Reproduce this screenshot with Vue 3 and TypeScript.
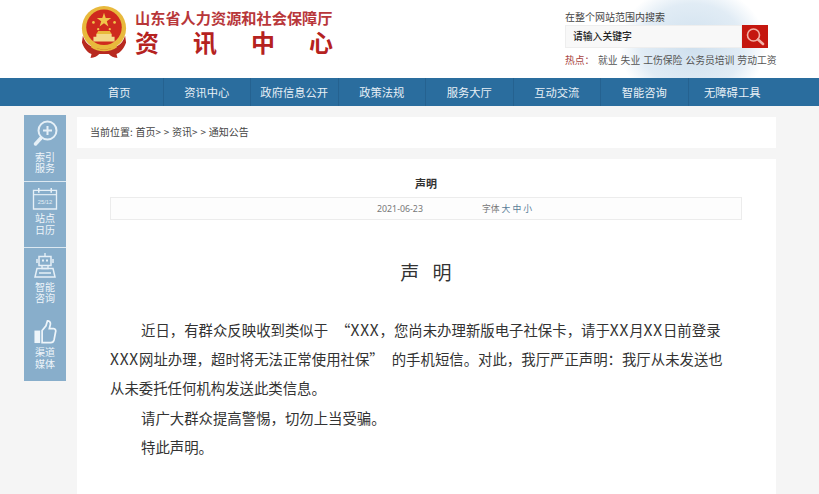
<template>
  <div class="page">
    <header class="top">
      <div class="watermark"></div>
      <div class="logo">
        <svg class="emblem" width="48" height="53" viewBox="0 0 50 55">
          <circle cx="25" cy="23" r="23" fill="#e8b93c" />
          <circle cx="25" cy="22" r="18.5" fill="#cf2a1e" />
          <path d="M25 7l1.800 5.400h5.700l-4.600 3.400 1.700 5.400-4.600-3.300-4.600 3.300 1.700-5.400-4.600-3.400h5.700z" fill="#f0c64a" />
          <circle cx="14" cy="17" r="1.400" fill="#f0c64a" />
          <circle cx="36" cy="17" r="1.400" fill="#f0c64a" />
          <circle cx="19" cy="24" r="1.200" fill="#f0c64a" />
          <circle cx="31" cy="24" r="1.200" fill="#f0c64a" />
          <path d="M14 37v-5h3v-3h16v3h3v5z" fill="#f3d98a" />
          <path d="M19 26h12l2 3h-16z" fill="#e8b93c" />
          <path d="M3 31c3 10 11 14 22 14s19-4 22-14l1 7c-3 8-7 11-10 12l1 4c-4 0-7-2-9-4h-10c-2 2-5 4-9 4l1-4c-3-1-7-4-10-12z" fill="#b8291f" />
          <path d="M12 42c4 3 8 4 13 4s9-1 13-4" fill="none" stroke="#e8b93c" stroke-width="2" />
        </svg>
        <div class="logo-text">
          <div class="org">山东省人力资源和社会保障厅</div>
          <div class="site">
            <span>资</span><span>讯</span><span>中</span><span>心</span>
          </div>
        </div>
      </div>
      <div class="search">
        <div class="search-tip">在整个网站范围内搜索</div>
        <div class="search-box">
          <div class="search-input">请输入关键字</div>
          <button class="search-btn" type="button" aria-label="搜索">
            <svg width="20" height="20" viewBox="0 0 20 20" fill="none">
              <circle cx="8.500" cy="8" r="6" stroke="#f3b1a6" stroke-width="1.600" />
              <path d="M13 12.500l5 4.500" stroke="#f3b1a6" stroke-width="2.600" stroke-linecap="round" />
            </svg>
          </button>
        </div>
        <div class="hot">
          <span class="hot-label">热点：</span>
          <a v-for="h in hotWords" :key="h" class="hot-link">{{ h }}</a>
        </div>
      </div>
    </header>

    <nav class="nav">
      <div class="nav-inner">
        <a v-for="n in navItems" :key="n" class="nav-item">{{ n }}</a>
      </div>
    </nav>

    <main class="main">
      <aside class="side">
        <div class="side-item">
          <svg width="26" height="28" viewBox="0 0 26 28" fill="none" stroke="#e6f0f7">
            <circle cx="15.500" cy="10.500" r="9" stroke-width="2" />
            <path d="M15.500 6v9M11 10.500h9" stroke-width="2" />
            <path d="M9 18l-5.500 6" stroke-width="3.500" stroke-linecap="round" />
          </svg>
          <span>索引<br />服务</span>
        </div>
        <div class="side-item">
          <svg width="26" height="23" viewBox="0 0 26 24" fill="none" stroke="#e6f0f7">
            <path d="M1 3.500h24v19.500h-24z" stroke-width="1.400" />
            <path d="M1 8h24" stroke-width="1.200" />
            <path d="M6.500 1v5M19.500 1v5" stroke-width="1.600" />
            <text x="13" y="18" text-anchor="middle" class="cal-text">25/12</text>
          </svg>
          <span>站点<br />日历</span>
        </div>
        <div class="side-item">
          <svg width="22" height="25" viewBox="0 0 22 25" fill="none" stroke="#e6f0f7">
            <path d="M11 0v3" stroke-width="1.400" />
            <path d="M5 3.500h12v9h-12zM3 6v4M19 6v4" stroke-width="1.500" />
            <path d="M8 6.500h2v2h-2zM12 6.500h2v2h-2z" fill="#e6f0f7" stroke="none" />
            <path d="M8 12.500v3h6v-3" stroke-width="1.400" />
            <path d="M3 15.500h16l2 8.500h-20z" stroke-width="1.500" />
            <path d="M5 20h12" stroke-width="1.500" />
          </svg>
          <span>智能<br />咨询</span>
        </div>
        <div class="side-item">
          <svg width="24" height="24" viewBox="0 0 24 25">
            <path d="M1 11h6v13h-6z" fill="#eef5fa" />
            <path d="M9 11l4-5 1.500-5c2.500-.5 3.500 2 3 4l-1 4h4.500c2 0 2.500 2 2 3.500l-1.500 8c-.5 2-1.500 3-3.500 3h-9z" fill="none" stroke="#eef5fa" stroke-width="1.800" />
          </svg>
          <span>渠道<br />媒体</span>
        </div>
      </aside>

      <div class="content">
        <div class="crumb">当前位置: 首页&gt; &gt; 资讯&gt; &gt; 通知公告</div>
        <article class="card">
          <h2 class="card-title">声明</h2>
          <div class="meta">
            <span class="date">2021-06-23</span>
            <span class="font-size">字体 <a>大</a> <a>中</a> <a>小</a></span>
          </div>
          <h1 class="headline">声 明</h1>
          <div class="body">
            <p>
              近日，有群众反映收到类似于<span class="quote-open">“</span><span class="latin">XXX</span>，您尚未办理新版电子社保卡，请于<span class="latin">XX</span>月<span class="latin">XX</span>日前登录<span class="latin">XXX</span>网址办理，超时将无法正常使用社保<span class="quote-close">”</span>的手机短信。对此，我厅严正声明：我厅从未发送也<span class="last-line">从未委托任何机构发送此类信息。</span>
            </p>
            <p>请广大群众提高警惕，切勿上当受骗。</p>
            <p>特此声明。</p>
          </div>
        </article>
      </div>
    </main>
  </div>
</template>

<script setup lang="ts">
const hotWords: string[] = ['就业', '失业', '工伤保险', '公务员培训', '劳动工资']

const navItems: string[] = [
  '首页',
  '资讯中心',
  '政府信息公开',
  '政策法规',
  '服务大厅',
  '互动交流',
  '智能咨询',
  '无障碍工具',
]
</script>

<style>
html,
body {
  margin: 0;
  height: 100%;
  overflow: hidden;
  background: #f5f5f5;
}
</style>

<style scoped>
.page {
  height: 494px;
  overflow: hidden;
  font-family: "Noto Sans CJK SC", "Noto Sans", sans-serif;
  background: #f5f5f5;
}

/* 顶部 */
.top {
  position: relative;
  height: 78px;
  background: #fff;
  display: flex;
  justify-content: space-between;
  overflow: hidden;
}

.watermark {
  position: absolute;
  left: 620px;
  top: -14px;
  width: 145px;
  height: 120px;
  background: radial-gradient(ellipse at center, #cfe0ee 0%, #e1ecf5 50%, rgba(255, 255, 255, 0) 72%);
}

.logo {
  display: flex;
  margin-left: 80px;
  padding-top: 6px;
  gap: 7px;
  position: relative;
}

.logo-text {
  width: 198px;
  padding-top: 4px;
  font-family: "Liberation Sans", "Noto Sans CJK SC", sans-serif;
}

.org {
  font-size: 15.2px;
  line-height: 18px;
  font-weight: 700;
  color: #b8373a;
  white-space: nowrap;
}

.site {
  display: flex;
  justify-content: space-between;
  font-size: 24px;
  line-height: 28px;
  font-weight: 700;
  color: #b5221f;
  margin-top: 2px;
}

.search {
  position: relative;
  width: 254px;
  padding-top: 10px;
  box-sizing: border-box;
}

.search-tip {
  font-size: 10px;
  line-height: 13px;
  color: #444;
}

.search-box {
  display: flex;
  width: 203px;
  height: 23px;
  margin-top: 2px;
}

.search-input {
  flex: 1;
  background: #f8f8f8;
  border: 1px solid #eee;
  font-size: 9.800px;
  font-weight: 500;
  line-height: 21px;
  padding-left: 7px;
  color: #222;
}

.search-btn {
  width: 26px;
  height: 23px;
  padding: 0;
  border: 0;
  background: #c5170f;
  display: flex;
  align-items: center;
  justify-content: center;
}

.hot {
  display: flex;
  margin-top: 5px;
  font-size: 9.800px;
  line-height: 14px;
  white-space: nowrap;
}

.hot-label {
  color: #a8443f;
  width: 33px;
}

.hot-link {
  color: #555;
  margin-right: 3px;
}

/* 导航 */
.nav {
  height: 28px;
  background: #2a6d9e;
}

.nav-inner {
  margin-left: 76px;
  width: 700px;
  display: grid;
  grid-template-columns: repeat(8, 1fr);
}

.nav-item {
  height: 28px;
  line-height: 28px;
  text-align: center;
  font-size: 11.300px;
  color: #e8f0f6;
  border-right: 1px solid #256290;
}

.nav-item:last-child {
  border-right: 0;
}

/* 主体 */
.main {
  display: flex;
  align-items: flex-start;
  padding-left: 24px;
  gap: 11px;
}

.side {
  width: 42px;
  margin-top: 9px;
  background: #88aecb;
}

.side-item {
  height: 66.500px;
  padding-top: 5px;
  box-sizing: border-box;
  display: flex;
  flex-direction: column;
  align-items: center;
  color: #eef5fa;
  font-family: "Liberation Sans", "Noto Sans CJK SC", sans-serif;
  font-size: 10px;
  line-height: 11.500px;
  text-align: center;
}

.side-item:nth-child(-n + 2) {
  border-bottom: 1px solid #dce8f1;
}

.side-item span {
  margin-top: 3.500px;
}

.cal-text {
  font-size: 6px;
  fill: #e6f0f7;
  stroke: none;
  font-family: "Liberation Sans", sans-serif;
}

.content {
  width: 699px;
  margin-top: 11px;
}

.crumb {
  height: 31px;
  line-height: 30px;
  background: #fff;
  padding-left: 13px;
  font-size: 10px;
  word-spacing: 0.500px;
  color: #444;
}

.card {
  margin-top: 11px;
  background: #fff;
  height: 340px;
  padding: 0 34px 0 33px;
}

.card-title {
  margin: 0;
  padding-top: 17px;
  text-align: center;
  font-size: 11px;
  line-height: 15px;
  font-weight: 700;
  color: #333;
}

.meta {
  height: 21px;
  margin-top: 6px;
  background: #fdfdfd;
  border: 1px solid #ececec;
  display: flex;
  align-items: center;
  font-size: 8.800px;
  color: #777;
  padding-left: 266px;
}

.date {
  width: 105px;
  font-family: "Noto Sans", sans-serif;
}

.font-size a {
  color: #5a7d98;
}

.headline {
  margin: 38px 0 0;
  text-align: center;
  font-size: 19px;
  line-height: 28px;
  font-weight: 400;
  color: #333;
  word-spacing: 9px;
}

.body {
  margin-top: 29px;
  padding-right: 12px;
  color: #333;
  font-size: 14.400px;
  line-height: 29.200px;
}

.body p {
  margin: 0;
  text-indent: 31px;
}

.last-line {
  display: block;
  text-indent: 0;
}

/* 拉丁字母和引号按参考图的宽度 */
.latin {
  font-size: 15.500px;
  line-height: 1;
  letter-spacing: 0.8px;
}

.quote-open {
  padding-left: 8px;
}

.quote-close {
  padding-right: 8px;
}
</style>
